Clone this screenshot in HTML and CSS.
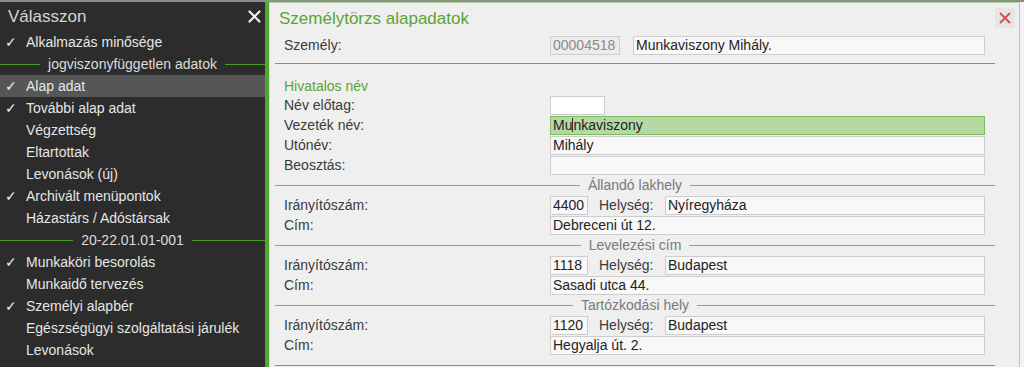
FILE: index.html
```html
<!DOCTYPE html>
<html lang="hu">
<head>
<meta charset="utf-8">
<title>Személytörzs alapadatok</title>
<link rel="stylesheet" href="styles.css">
</head>
<body>
<div class="topbar"></div>
<div class="app">
  <aside class="sidebar">
    <div class="side-head">
      <span class="side-title">Válasszon</span>
      <svg class="side-close" width="13" height="13" viewBox="0 0 13 13"><path d="M1.5 1.5 L11.5 11.5 M11.5 1.5 L1.5 11.5" stroke="#f2f2f2" stroke-width="2.2" stroke-linecap="round"/></svg>
    </div>
    <ul class="menu">
      <li class="item"><span class="chk">✓</span>Alkalmazás minősége</li>
      <li class="sep"><span>jogviszonyfüggetlen adatok</span></li>
      <li class="item active"><span class="chk">✓</span>Alap adat</li>
      <li class="item"><span class="chk">✓</span>További alap adat</li>
      <li class="item"><span class="chk"></span>Végzettség</li>
      <li class="item"><span class="chk"></span>Eltartottak</li>
      <li class="item"><span class="chk"></span>Levonások (új)</li>
      <li class="item"><span class="chk">✓</span>Archivált menüpontok</li>
      <li class="item"><span class="chk"></span>Házastárs / Adóstársak</li>
      <li class="sep"><span>20-22.01.01-001</span></li>
      <li class="item"><span class="chk">✓</span>Munkaköri besorolás</li>
      <li class="item"><span class="chk"></span>Munkaidő tervezés</li>
      <li class="item"><span class="chk">✓</span>Személyi alapbér</li>
      <li class="item"><span class="chk"></span>Egészségügyi szolgáltatási járulék</li>
      <li class="item"><span class="chk"></span>Levonások</li>
    </ul>
  </aside>
  <div class="divider"></div>
  <main class="panel">
    <div class="panel-head">
      <h1 class="panel-title">Személytörzs alapadatok</h1>
      <span class="panel-close"><svg width="12" height="12" viewBox="0 0 12 12"><path d="M1 1 L11 11 M11 1 L1 11" stroke="#d6503a" stroke-width="1.8"/></svg></span>
    </div>
    <div class="row">
      <span class="lbl">Személy:</span>
      <div class="fields">
        <span class="box id">00004518</span>
        <span class="box name">Munkaviszony Mihály.</span>
      </div>
    </div>
    <div class="rule first"></div>
    <div class="subhead">Hivatalos név</div>
    <div class="row"><span class="lbl">Név előtag:</span><div class="fields"><span class="box short"></span></div></div>
    <div class="row"><span class="lbl">Vezeték név:</span><div class="fields"><span class="box wide focus">Mu<span class="caret"></span>nkaviszony</span></div></div>
    <div class="row"><span class="lbl">Utónév:</span><div class="fields"><span class="box wide">Mihály</span></div></div>
    <div class="row"><span class="lbl">Beosztás:</span><div class="fields"><span class="box wide"></span></div></div>

    <div class="section"><span>Állandó lakhely</span></div>
    <div class="row"><span class="lbl">Irányítószám:</span><div class="fields"><span class="box zip">4400</span><span class="city-lbl">Helység:</span><span class="box city">Nyíregyháza</span></div></div>
    <div class="row"><span class="lbl">Cím:</span><div class="fields"><span class="box wide">Debreceni út 12.</span></div></div>

    <div class="section"><span>Levelezési cím</span></div>
    <div class="row"><span class="lbl">Irányítószám:</span><div class="fields"><span class="box zip">1118</span><span class="city-lbl">Helység:</span><span class="box city">Budapest</span></div></div>
    <div class="row"><span class="lbl">Cím:</span><div class="fields"><span class="box wide">Sasadi utca 44.</span></div></div>

    <div class="section"><span>Tartózkodási hely</span></div>
    <div class="row"><span class="lbl">Irányítószám:</span><div class="fields"><span class="box zip">1120</span><span class="city-lbl">Helység:</span><span class="box city">Budapest</span></div></div>
    <div class="row"><span class="lbl">Cím:</span><div class="fields"><span class="box wide">Hegyalja út. 2.</span></div></div>
    <div class="rule last"></div>
  </main>
  <div class="edge"></div>
</div>
</body>
</html>
```

FILE: styles.css
```css
* { box-sizing: border-box; }
html, body { margin: 0; padding: 0; }
body {
  width: 1024px;
  height: 367px;
  overflow: hidden;
  font-family: "Liberation Sans", Arial, sans-serif;
  font-size: 14px;
  background: #f2f2f2;
}
.topbar { height: 2px; background: #8c8c8c; }
.app { display: flex; height: 365px; }

/* sidebar */
.sidebar { width: 265px; background: #2c2c2c; color: #e6e6e6; flex: none; }
.side-head {
  height: 29px;
  display: flex;
  align-items: center;
  justify-content: space-between;
  padding: 0 4px 0 8px;
}
.side-title { font-size: 17px; color: #d4d4d4; }
.side-close { display: block; }
.menu { list-style: none; margin: 0; padding: 0; }
.item {
  height: 22px;
  line-height: 22px;
  display: flex;
  align-items: center;
  white-space: nowrap;
}
.item.active { background: #565656; }
.chk { width: 26px; flex: none; padding-left: 5px; font-size: 14px; color: #f0f0f0; }
.sep {
  height: 22px;
  display: flex;
  align-items: center;
  gap: 8px;
  color: #dcdcdc;
}
.sep::before, .sep::after {
  content: "";
  flex: 1;
  height: 1px;
  background: #4a9a2c;
}
.divider { width: 4px; background: #52a82c; flex: none; }
.edge { flex: 1; background: #f4f4f4; }

/* main panel */
.panel {
  width: 751px;
  flex: none;
  background: #efefef;
  border-top: 1px solid #a8d494;
  border-right: 1px solid #a8d494;
  border-left: 1px solid #d8d8d8;
  padding: 0 24px 0 5px;
  color: #333;
}
.panel-head {
  height: 32px;
  display: flex;
  align-items: center;
  justify-content: space-between;
  padding-left: 4px;
}
.panel-title { margin: 0; font-size: 17px; font-weight: normal; color: #5aa532; }
.panel-close {
  margin-right: -20px;
  margin-top: -3px;
  width: 20px;
  height: 20px;
  display: flex;
  align-items: center;
  justify-content: center;
  background: #e5e5e5;
}
.row { height: 20px; display: flex; align-items: center; }
.lbl { width: 275px; padding-left: 9px; flex: none; color: #3a3a3a; }
.fields { display: flex; align-items: center; flex: 1; padding-right: 10px; }
.box {
  height: 19px;
  line-height: 17px;
  border: 1px solid #cdcdcd;
  background: #f8f8f8;
  padding: 0 2px;
  color: #222;
  white-space: nowrap;
}
.box.id { width: 70px; color: #8a8a8a; background: #ececec; padding-left: 2px; }
.box.name { margin-left: 13px; flex: 1; }
.box.short { width: 55px; background: #fff; }
.box.wide { flex: 1; }
.box.focus { background: #b5d9a3; border-color: #7dbb63; }
.caret { display: inline-block; width: 1px; height: 14px; background: #333; vertical-align: -2px; }
.box.zip { width: 38px; }
.city-lbl { width: 77px; padding-left: 11px; flex: none; color: #3a3a3a; }
.box.city { flex: 1; }
.rule { height: 1px; background: #8a8a8a; }
.rule.first { margin-top: 8px; }
.rule.last { margin-top: 10px; }
.subhead { margin-top: 13px; height: 18px; line-height: 18px; padding-left: 9px; color: #5aa532; }
.section {
  height: 20px;
  display: flex;
  align-items: center;
  gap: 8px;
  color: #7a7a7a;
}
.section::before, .section::after {
  content: "";
  flex: 1;
  height: 1px;
  background: #999;
}
```
